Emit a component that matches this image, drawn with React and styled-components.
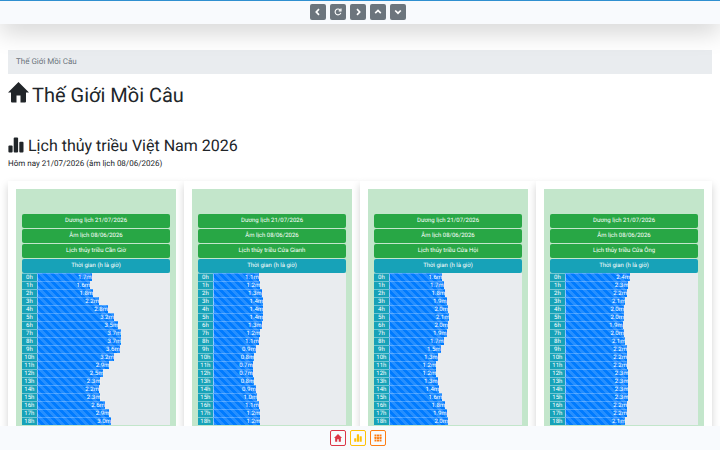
import React from 'react';
import styled, { createGlobalStyle } from 'styled-components';

const today = { solar: '21/07/2026', lunar: '08/06/2026' };

// Tide height in metres for each hour, starting at 0h
const stations = [
  {
    name: 'Cần Giờ',
    tides: [1.7, 1.6, 1.8, 2.2, 2.8, 3.2, 3.5, 3.7, 3.7, 3.6, 3.2, 2.9, 2.5, 2.3, 2.2, 2.3, 2.6, 2.9, 3.0]
  },
  {
    name: 'Cửa Gianh',
    tides: [1.1, 1.2, 1.3, 1.4, 1.4, 1.4, 1.3, 1.2, 1.1, 0.9, 0.8, 0.7, 0.7, 0.8, 0.9, 1.0, 1.1, 1.2, 1.2]
  },
  {
    name: 'Cửa Hội',
    tides: [1.6, 1.7, 1.8, 1.9, 2.0, 2.1, 2.0, 1.9, 1.7, 1.5, 1.3, 1.2, 1.2, 1.3, 1.4, 1.6, 1.8, 1.9, 2.0]
  },
  {
    name: 'Cửa Ông',
    tides: [2.4, 2.3, 2.2, 2.1, 2.0, 2.0, 1.9, 2.0, 2.1, 2.2, 2.2, 2.2, 2.3, 2.3, 2.3, 2.3, 2.2, 2.2, 2.1]
  }
];

const HomeIcon = ({ size }) => (
  <svg width={size} height={size} viewBox="0 0 21 21" fill="currentColor" aria-hidden="true">
    <path d="M10.5 0 L21 10.5 H18 V19.5 Q18 20.5 17 20.5 H12.5 V13.5 H8.5 V20.5 H4 Q3 20.5 3 19.5 V10.5 H0 Z" />
  </svg>
);

const ChartIcon = ({ size }) => (
  <svg width={size} height={size} viewBox="0 0 16 16" fill="currentColor" aria-hidden="true">
    <rect x="0.4" y="8.5" width="4.2" height="7" rx="1" />
    <rect x="5.7" y="0.5" width="4.4" height="15" rx="1" />
    <rect x="11.3" y="4.7" width="4.2" height="10.8" rx="1" />
  </svg>
);

const GridIcon = ({ size }) => (
  <svg width={size} height={size} viewBox="0 0 16 16" fill="currentColor" aria-hidden="true">
    {[1, 6, 11].map((y) => [1, 6, 11].map((x) => (
      <rect key={`${x}-${y}`} x={x} y={y} width="4" height="4" rx="0.5" />
    )))}
  </svg>
);

const StrokeIcon = ({ d, weight = 1.7 }) => (
  <svg width="8" height="8" viewBox="0 0 8 8" fill="none" stroke="currentColor" strokeWidth={weight} aria-hidden="true">
    <path d={d} />
  </svg>
);

const navButtons = [
  { label: 'Quay lại', d: 'M5 1.2 L2.3 4 L5 6.8' },
  { label: 'Tải lại', d: 'M6.2 2 A2.9 2.9 0 1 0 6.8 4.8 M7 0.6 V2.9 H4.7', weight: 1.1 },
  { label: 'Tiếp', d: 'M3 1.2 L5.7 4 L3 6.8' },
  { label: 'Lên đầu', d: 'M1.2 5.2 L4 2.5 L6.8 5.2' },
  { label: 'Xuống cuối', d: 'M1.2 2.5 L4 5.2 L6.8 2.5' }
];

const StationCard = ({ station }) => (
  <Card>
    <CardBody>
      <Badge>Dương lịch {today.solar}</Badge>
      <Badge>Âm lịch {today.lunar}</Badge>
      <Badge>Lịch thủy triều {station.name}</Badge>
      <Badge $info>Thời gian (h là giờ)</Badge>
      <Hours>
        {station.tides.map((tide, hour) => (
          <HourRow key={hour}>
            <HourLabel>{hour}h</HourLabel>
            <TideBar style={{ width: `${20 + tide * 10}%` }}>{tide.toFixed(1)}m</TideBar>
          </HourRow>
        ))}
      </Hours>
    </CardBody>
  </Card>
);

const App = () => (
  <>
    <GlobalStyle />
    <Page>
      <TopBar>
        {navButtons.map((button) => (
          <NavButton key={button.label} type="button" aria-label={button.label}>
            <StrokeIcon d={button.d} weight={button.weight} />
          </NavButton>
        ))}
      </TopBar>
      <Main>
        <Breadcrumb aria-label="breadcrumb">Thế Giới Mồi Câu</Breadcrumb>
        <Title><HomeIcon size={21} />Thế Giới Mồi Câu</Title>
        <Subtitle><ChartIcon size={16} />Lịch thủy triều Việt Nam 2026</Subtitle>
        <DateLine>Hôm nay {today.solar} (âm lịch {today.lunar})</DateLine>
        <Cards>
          {stations.map((station) => (
            <StationCard key={station.name} station={station} />
          ))}
        </Cards>
      </Main>
      <BottomBar>
        <OutlineButton type="button" aria-label="Trang chủ" $color="#dc3545"><HomeIcon size={8} /></OutlineButton>
        <OutlineButton type="button" aria-label="Thủy triều" $color="#ffc107"><ChartIcon size={8} /></OutlineButton>
        <OutlineButton type="button" aria-label="Danh mục" $color="#fd7e14"><GridIcon size={8} /></OutlineButton>
      </BottomBar>
    </Page>
  </>
);

// Styled components
const GlobalStyle = createGlobalStyle`
  * {
    box-sizing: border-box;
  }

  body {
    margin: 0;
    background: #fff;
    color: #212529;
    font-family: Roboto, 'Liberation Sans', sans-serif;
    font-size: 8px;
    line-height: 12px;
    text-rendering: geometricPrecision;
  }
`;

const Page = styled.div`
  display: flex;
  flex-direction: column;
  height: 100vh;
`;

const TopBar = styled.header`
  display: flex;
  flex: none;
  justify-content: center;
  gap: 4px;
  padding: 3px 12px 4px 8px;
  border-top: 1px solid #2f8fd0;
  background: #f8fafd;
  box-shadow: 0 8px 24px rgba(0, 0, 0, 0.18);
  z-index: 1;
`;

const NavButton = styled.button`
  display: flex;
  align-items: center;
  justify-content: center;
  width: 16px;
  height: 16px;
  padding: 0;
  border: 0;
  border-radius: 2px;
  background: #6c757d;
  color: #fff;
`;

const Main = styled.main`
  flex: 1;
  min-height: 0;
  padding: 26px 8px 0;
  overflow-y: auto;
  scrollbar-width: none;
`;

const Breadcrumb = styled.nav`
  padding: 6px 8px;
  background: #e9ecef;
  color: #6c757d;
`;

const Title = styled.h1`
  display: flex;
  align-items: center;
  gap: 3px;
  margin: 8px 0 28px;
  font-size: 20px;
  line-height: 24px;
  font-weight: 400;

  svg {
    margin-bottom: 5px;
  }
`;

const Subtitle = styled.h2`
  display: flex;
  align-items: center;
  gap: 4px;
  margin: 0;
  font-size: 16px;
  line-height: 20px;
  font-weight: 400;

  svg {
    margin-bottom: 2px;
  }
`;

const DateLine = styled.p`
  margin: 2px 0 11px;
`;

const Cards = styled.section`
  display: grid;
  grid-template-columns: repeat(4, 1fr);
`;

const Card = styled.article`
  padding: 8px;
  background: #fff;
  box-shadow: 0 4px 8px rgba(0, 0, 0, 0.18);
`;

const CardBody = styled.div`
  padding: 25px 6px 24px;
  background: #c3e6cb;
`;

const Badge = styled.div`
  margin-bottom: ${(props) => (props.$info ? '0' : '1px')};
  border-radius: 2px;
  background: ${(props) => (props.$info ? '#17a2b8' : '#28a745')};
  color: #fff;
  font-size: 6px;
  line-height: 14px;
  text-align: center;
`;

const Hours = styled.ul`
  margin: 0;
  padding: 0;
  list-style: none;
`;

const HourRow = styled.li`
  display: flex;
  height: 8px;
  background: #e9ecef;
  color: #fff;
  font-size: 6px;
  line-height: 7px;
`;

const HourLabel = styled.span`
  width: 10%;
  border-top: 1px solid rgba(255, 255, 255, 0.4);
  background: #17a2b8;
  text-align: center;
`;

const TideBar = styled.span`
  border-top: 1px solid rgba(255, 255, 255, 0.25);
  border-left: 1px solid rgba(255, 255, 255, 0.5);
  background: #007bff linear-gradient(
    45deg,
    rgba(255, 255, 255, 0.15) 25%,
    transparent 25%,
    transparent 50%,
    rgba(255, 255, 255, 0.15) 50%,
    rgba(255, 255, 255, 0.15) 75%,
    transparent 75%
  ) 0 0 / 8px 8px;
  text-align: right;
`;

const BottomBar = styled.footer`
  display: flex;
  flex: none;
  justify-content: center;
  gap: 4px;
  padding: 4px 12px 4px 8px;
  background: #f8fafd;
  z-index: 1;
`;

const OutlineButton = styled.button`
  display: flex;
  align-items: center;
  justify-content: center;
  width: 16px;
  height: 16px;
  padding: 0;
  border: 1px solid ${(props) => props.$color};
  border-radius: 2px;
  background: transparent;
  color: ${(props) => props.$color};
`;

export default App;
